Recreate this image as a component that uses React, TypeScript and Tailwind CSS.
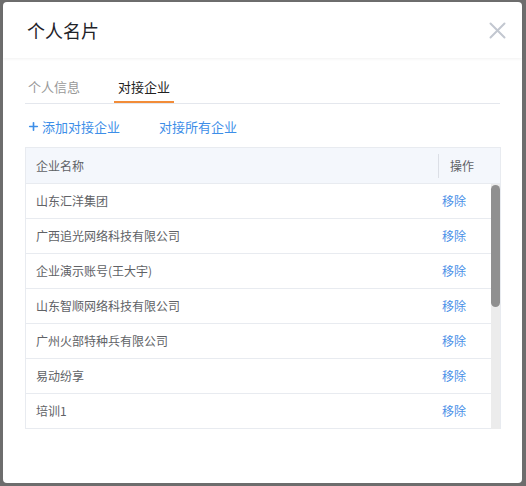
import { Plus } from "lucide-react";

const COMPANIES = [
  "山东汇洋集团",
  "广西追光网络科技有限公司",
  "企业演示账号(王大宇)",
  "山东智顺网络科技有限公司",
  "广州火部特种兵有限公司",
  "易动纷享",
  "培训1",
];

const FONT = {
  fontFamily: '"Noto Sans CJK SC", "Noto Sans", sans-serif',
};

export default function App() {
  return (
    <div
      className="h-[486px] w-[526px] overflow-hidden bg-[#6d6d6d] pl-[3px] pt-[2px]"
      style={FONT}
    >
      <div className="flex h-[481px] w-[519px] flex-col rounded-[4px] bg-white">
        {/* ---- header ---- */}
        <div className="flex h-[56px] items-center justify-between pl-[24px] pr-[13px] shadow-[0_1px_3px_rgba(0,0,0,0.06)]">
          <h1 className="text-[18px] leading-none text-[#1f2329]">个人名片</h1>
          <button className="flex h-[24px] w-[24px] items-center justify-center">
            <svg width="17" height="17" viewBox="0 0 17 17">
              <path
                d="M1.5 1.5 L15.5 15.5 M15.5 1.5 L1.5 15.5"
                stroke="#c2c7d0"
                strokeWidth="2"
                strokeLinecap="round"
              />
            </svg>
          </button>
        </div>

        {/* ---- body ---- */}
        <div className="flex flex-col px-[22px] pt-[14px]">
          <div className="flex h-[32px] items-stretch border-b border-[#e4e7ed]">
            <div className="flex items-center pb-[2px] pl-[3px] text-[13px] text-[#999]">
              个人信息
            </div>
            <div className="ml-[34px] flex items-center border-b-2 border-[#f28c38] px-[4px] text-[13px] text-[#222]">
              对接企业
            </div>
          </div>

          <div className="flex h-[43px] items-center pl-[2px] pt-[2px] text-[13px] text-[#3d8ee8]">
            <span className="flex items-center gap-[2px]">
              <Plus size={13} strokeWidth={3} />
              添加对接企业
            </span>
            <span className="ml-[39px]">对接所有企业</span>
          </div>

          {/* ---- table ---- */}
          <div className="w-[476px] border-x border-t border-[#e8ebf0]">
            <div className="flex h-[36px] items-center border-b border-[#e8ebf0] bg-[#f4f7fc] text-[12px] text-[#606266]">
              <div className="flex-1 pl-[10px]">企业名称</div>
              <div className="flex h-[24px] w-[62px] items-center border-l border-[#dcdfe6] pl-[11px]">
                操作
              </div>
            </div>

            <div className="flex h-[245px]">
              <div className="flex-1 overflow-hidden">
                {COMPANIES.map((name) => (
                  <div
                    key={name}
                    className="flex h-[35px] items-center border-b border-[#e8ebf0] text-[12px]"
                  >
                    <div className="flex-1 pl-[10px] text-[#606266]">{name}</div>
                    <div className="w-[49px] text-[#4a8fe7]">移除</div>
                  </div>
                ))}
              </div>
              <div className="w-[9px] bg-[#ececec] pt-[1px]">
                <div className="h-[122px] w-[9px] rounded-[5px] bg-[#909090]" />
              </div>
            </div>
          </div>
        </div>
      </div>
    </div>
  );
}
